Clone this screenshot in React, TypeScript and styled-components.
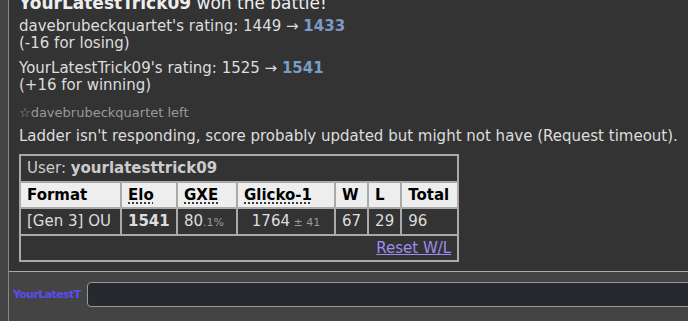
import React from 'react';
import styled, { createGlobalStyle } from 'styled-components';

const GlobalStyle = createGlobalStyle`
  html, body {
    margin: 0;
    padding: 0;
    background: #333;
    overflow: hidden;
  }
  body {
    font-family: Verdana, "DejaVu Sans", sans-serif;
    font-size: 15px;
    color: #ddd;
  }
`;

const columns = [
  { label: 'Format', width: 101 },
  { label: 'Elo', width: 56, abbr: true },
  { label: 'GXE', width: 60, abbr: true },
  { label: 'Glicko-1', width: 98, abbr: true },
  { label: 'W', width: 33 },
  { label: 'L', width: 32 },
  { label: 'Total', width: 57 },
];

const App: React.FC = () => {
  return (
    <Page>
      <GlobalStyle />
      <Side />
      <Main>
        <Log>
          <Title>
            <strong>YourLatestTrick09</strong> won the battle!
          </Title>
          <Rating $first>
            davebrubeckquartet's rating: 1449 → <NewRating>1433</NewRating>
            <br />
            (-16 for losing)
          </Rating>
          <Rating>
            YourLatestTrick09's rating: 1525 → <NewRating>1541</NewRating>
            <br />
            (+16 for winning)
          </Rating>
          <Notice>☆davebrubeckquartet left</Notice>
          <Message>
            Ladder isn't responding, score probably updated but might not have
            (Request timeout).
          </Message>
          <Ladder>
            <tbody>
              <tr>
                <UserCell colSpan={7}>
                  User: <strong>yourlatesttrick09</strong>
                </UserCell>
              </tr>
              <tr>
                {columns.map((col) => (
                  <HeadCell key={col.label} style={{ width: col.width }}>
                    {col.abbr ? <Abbr>{col.label}</Abbr> : col.label}
                  </HeadCell>
                ))}
              </tr>
              <tr>
                <Cell>[Gen 3] OU</Cell>
                <Cell>
                  <strong>1541</strong>
                </Cell>
                <Cell>
                  80<Dim>.1%</Dim>
                </Cell>
                <Cell $align="center">
                  1764<Dim> ± 41</Dim>
                </Cell>
                <Cell>67</Cell>
                <Cell>29</Cell>
                <Cell>96</Cell>
              </tr>
              <tr>
                <Cell colSpan={7} $align="right">
                  <ResetLink href="#">Reset W/L</ResetLink>
                </Cell>
              </tr>
            </tbody>
          </Ladder>
        </Log>
        <ChatBar>
          <UserLabel>YourLatestT</UserLabel>
          <ChatInput />
        </ChatBar>
      </Main>
    </Page>
  );
};

export default App;

const Page = styled.div`
  display: flex;
  height: 100vh;
`;

const Side = styled.div`
  width: 8px;
  flex-shrink: 0;
  background: #444;
  border-right: 1px solid #888;
`;

const Main = styled.div`
  flex: 1;
  display: flex;
  flex-direction: column;
  min-width: 0;
`;

const Log = styled.div`
  flex: 1;
  overflow: hidden;
  padding-left: 10px;
  background: #333;
`;

const Title = styled.div`
  margin-top: -7px;
  font-size: 17px;
  line-height: 20px;
  color: #eee;
`;

const Rating = styled.div<{ $first?: boolean }>`
  margin-top: ${(p) => (p.$first ? '5px' : '8px')};
  line-height: 17px;
`;

const NewRating = styled.strong`
  color: #7b9bc8;
`;

const Notice = styled.div`
  margin-top: 12px;
  font-size: 13px;
  line-height: 14px;
  color: #999;
`;

const Message = styled.div`
  margin-top: 8px;
  line-height: 17px;
  white-space: nowrap;
`;

const Ladder = styled.table`
  margin-top: 9px;
  border-collapse: separate;
  border-spacing: 0;
  border-top: 2px solid #aaa;
  border-left: 2px solid #aaa;
  font-size: 15px;
`;

const BaseCell = styled.td<{ $align?: string }>`
  box-sizing: border-box;
  height: 26.5px;
  padding: 0 6px;
  border-right: 2px solid #aaa;
  border-bottom: 2px solid #aaa;
  text-align: ${(p) => p.$align || 'left'};
  vertical-align: middle;
  white-space: nowrap;
`;

const UserCell = styled(BaseCell)`
  color: #ccc;
`;

const HeadCell = styled(BaseCell).attrs({ as: 'th' })`
  background: #eee;
  color: #000;
  font-weight: bold;
`;

const Cell = styled(BaseCell)`
  color: #ddd;
`;

const Abbr = styled.span`
  text-decoration: underline dotted;
  text-underline-offset: 3px;
`;

const Dim = styled.small`
  font-size: 11px;
  color: #999;
`;

const ResetLink = styled.a`
  color: #9d8cf2;
  text-decoration: underline;
`;

const ChatBar = styled.div`
  box-sizing: border-box;
  height: 50px;
  flex-shrink: 0;
  display: flex;
  align-items: flex-start;
  gap: 7px;
  padding: 10px 0 0 4px;
  background: #444;
  border-top: 1px solid #aaa;
`;

const UserLabel = styled.div`
  width: 67px;
  white-space: nowrap;
  line-height: 25px;
  font-size: 11px;
  letter-spacing: -0.6px;
  font-weight: bold;
  color: #5a4cf0;
`;

const ChatInput = styled.input`
  flex: 1;
  box-sizing: border-box;
  height: 25px;
  margin: 0 -10px 0 0;
  background: #262a2e;
  border: 1px solid #999;
  border-radius: 4px;
  color: #ddd;
  outline: none;
`;
